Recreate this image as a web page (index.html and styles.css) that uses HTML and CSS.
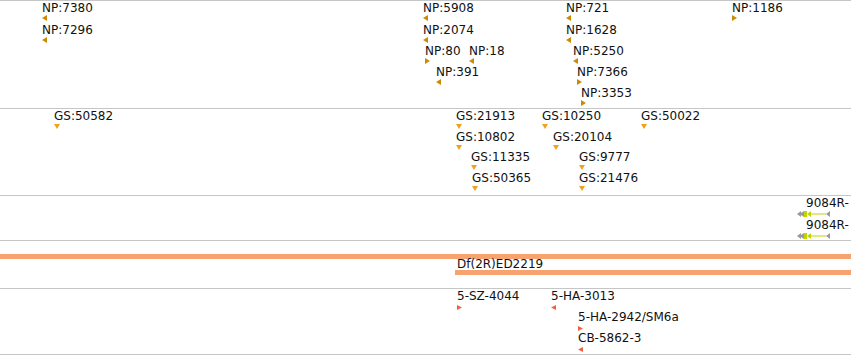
FILE: index.html
```html
<!DOCTYPE html>
<html>
<head>
<meta charset="utf-8">
<link rel="stylesheet" href="styles.css">
</head>
<body>
<div class="browser">
  <section class="track t-np">
    <div class="feat np" style="left:42px;top:1px"><div class="lbl">NP:7380</div><svg width="5" height="6"><polygon points="0,3 5,0 5,6"/></svg></div>
    <div class="feat np" style="left:42px;top:23px"><div class="lbl">NP:7296</div><svg width="5" height="6"><polygon points="0,3 5,0 5,6"/></svg></div>
    <div class="feat np" style="left:423px;top:1px"><div class="lbl">NP:5908</div><svg width="5" height="6"><polygon points="0,3 5,0 5,6"/></svg></div>
    <div class="feat np" style="left:423px;top:23px"><div class="lbl">NP:2074</div><svg width="5" height="6"><polygon points="0,3 5,0 5,6"/></svg></div>
    <div class="feat np" style="left:425px;top:44px"><div class="lbl">NP:80</div><svg width="5" height="6"><polygon points="5,3 0,0 0,6"/></svg></div>
    <div class="feat np" style="left:469px;top:44px"><div class="lbl">NP:18</div><svg width="5" height="6"><polygon points="0,3 5,0 5,6"/></svg></div>
    <div class="feat np" style="left:436px;top:65px"><div class="lbl">NP:391</div><svg width="5" height="6"><polygon points="0,3 5,0 5,6"/></svg></div>
    <div class="feat np" style="left:566px;top:1px"><div class="lbl">NP:721</div><svg width="5" height="6"><polygon points="0,3 5,0 5,6"/></svg></div>
    <div class="feat np" style="left:566px;top:23px"><div class="lbl">NP:1628</div><svg width="5" height="6"><polygon points="0,3 5,0 5,6"/></svg></div>
    <div class="feat np" style="left:573px;top:44px"><div class="lbl">NP:5250</div><svg width="5" height="6"><polygon points="0,3 5,0 5,6"/></svg></div>
    <div class="feat np" style="left:577px;top:65px"><div class="lbl">NP:7366</div><svg width="5" height="6"><polygon points="5,3 0,0 0,6"/></svg></div>
    <div class="feat np" style="left:581px;top:86px"><div class="lbl">NP:3353</div><svg width="5" height="6"><polygon points="5,3 0,0 0,6"/></svg></div>
    <div class="feat np" style="left:732px;top:1px"><div class="lbl">NP:1186</div><svg width="5" height="6"><polygon points="5,3 0,0 0,6"/></svg></div>
  </section>

  <section class="track t-gs">
    <div class="feat gs" style="left:54px;top:1px"><div class="lbl">GS:50582</div><svg width="6" height="5"><polygon points="0,0 6,0 3,5"/></svg></div>
    <div class="feat gs" style="left:456px;top:1px"><div class="lbl">GS:21913</div><svg width="6" height="5"><polygon points="0,0 6,0 3,5"/></svg></div>
    <div class="feat gs" style="left:456px;top:22px"><div class="lbl">GS:10802</div><svg width="6" height="5"><polygon points="0,0 6,0 3,5"/></svg></div>
    <div class="feat gs" style="left:471px;top:42px"><div class="lbl">GS:11335</div><svg width="6" height="5"><polygon points="0,0 6,0 3,5"/></svg></div>
    <div class="feat gs" style="left:472px;top:63px"><div class="lbl">GS:50365</div><svg width="6" height="5"><polygon points="0,0 6,0 3,5"/></svg></div>
    <div class="feat gs" style="left:542px;top:1px"><div class="lbl">GS:10250</div><svg width="6" height="5"><polygon points="0,0 6,0 3,5"/></svg></div>
    <div class="feat gs" style="left:553px;top:22px"><div class="lbl">GS:20104</div><svg width="6" height="5"><polygon points="0,0 6,0 3,5"/></svg></div>
    <div class="feat gs" style="left:579px;top:42px"><div class="lbl">GS:9777</div><svg width="6" height="5"><polygon points="0,0 6,0 3,5"/></svg></div>
    <div class="feat gs" style="left:579px;top:63px"><div class="lbl">GS:21476</div><svg width="6" height="5"><polygon points="0,0 6,0 3,5"/></svg></div>
    <div class="feat gs" style="left:641px;top:1px"><div class="lbl">GS:50022</div><svg width="6" height="5"><polygon points="0,0 6,0 3,5"/></svg></div>
  </section>

  <section class="track t-gene">
    <div class="feat gene" style="left:797px;top:1px">
      <div class="lbl">9084R-</div>
      <svg width="34" height="6"><polygon class="utr" points="0,3 4,0 4,2 7,0 7,6 4,4 4,6"/><rect class="cds" x="7" y="0" width="3" height="6"/><polygon class="cds" points="10,3 14,0 14,6"/><rect class="cds" x="14" y="2.5" width="15" height="1"/><polygon class="utr" points="29,3 33,0 33,6"/></svg>
    </div>
    <div class="feat gene" style="left:797px;top:23px">
      <div class="lbl">9084R-</div>
      <svg width="34" height="6"><polygon class="utr" points="0,3 4,0 4,2 7,0 7,6 4,4 4,6"/><rect class="cds" x="7" y="0" width="3" height="6"/><polygon class="cds" points="10,3 14,0 14,6"/><rect class="cds" x="14" y="2.5" width="15" height="1"/><polygon class="utr" points="29,3 33,0 33,6"/></svg>
    </div>
  </section>

  <section class="track t-df">
    <div class="bar bar-full"></div>
    <div class="df">
      <div class="df-lbl">Df(2R)ED2219</div>
      <div class="bar"></div>
    </div>
  </section>

  <section class="track t-ins">
    <div class="feat ins" style="left:457px;top:1px"><div class="lbl">5-SZ-4044</div><svg width="5" height="5"><polygon points="5,2.5 0,0 0,5"/></svg></div>
    <div class="feat ins" style="left:551px;top:1px"><div class="lbl">5-HA-3013</div><svg width="5" height="5"><polygon points="0,2.5 5,0 5,5"/></svg></div>
    <div class="feat ins" style="left:578px;top:22px"><div class="lbl">5-HA-2942/SM6a</div><svg width="5" height="5"><polygon points="5,2.5 0,0 0,5"/></svg></div>
    <div class="feat ins" style="left:578px;top:43px"><div class="lbl">CB-5862-3</div><svg width="5" height="5"><polygon points="0,2.5 5,0 5,5"/></svg></div>
  </section>
</div>
</body>
</html>
```
FILE: styles.css
```css
html, body {
  margin: 0;
  padding: 0;
  background: #ffffff;
}
body {
  width: 851px;
  height: 355px;
  overflow: hidden;
  font-family: "DejaVu Sans", "Liberation Sans", sans-serif;
  font-size: 12px;
  color: #111;
}
.browser {
  width: 851px;
  overflow: hidden;
}
.track {
  position: relative;
  border-top: 1px solid #c6c6c6;
  overflow: hidden;
}
.t-np { height: 107px; }
.t-gs { height: 86px; }
.t-gene { height: 44px; }
.t-df { height: 47px; }
.t-ins {
  height: 65px;
  border-bottom: 1px solid #c6c6c6;
}
.feat {
  position: absolute;
  white-space: nowrap;
}
.lbl {
  line-height: 12px;
  height: 12px;
}
.feat svg {
  display: block;
}
.np svg { margin-top: 1px; fill: #cc8a00; }
.gs svg { margin-top: 2px; fill: #f0a21c; }
.ins svg { margin-top: 3px; fill: #f2603c; }
.gene svg { margin-top: 2px; }
.gene .lbl { padding-left: 9px; }
.utr { fill: #9a9a9a; }
.cds { fill: #c2d400; }
.bar {
  height: 5px;
  background: #f6a370;
}
.bar-full {
  margin-top: 13px;
}
.df {
  margin-left: 455px;
}
.df-lbl {
  line-height: 11px;
  height: 11px;
  padding-left: 2px;
}
```
